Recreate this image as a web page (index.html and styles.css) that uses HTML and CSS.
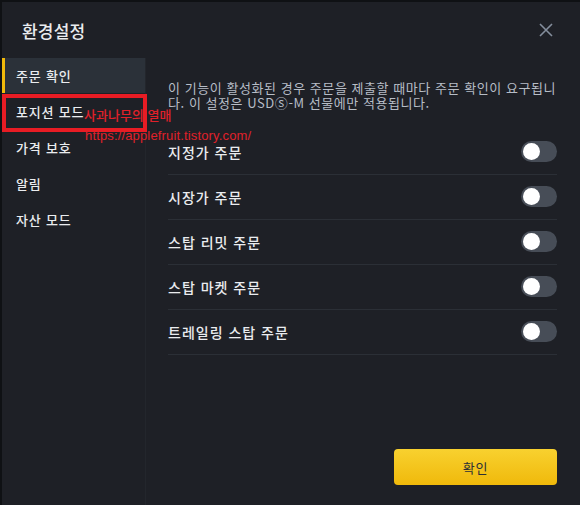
FILE: index.html
```html
<!DOCTYPE html>
<html lang="ko">
<head>
<meta charset="utf-8">
<link rel="stylesheet" href="styles.css">
</head>
<body>
<div class="modal">
  <header class="header">
    <h1 class="title">환경설정</h1>
    <button class="close" aria-label="close">
      <svg width="16" height="16" viewBox="0 0 16 16"><path d="M2 2 L14 14 M14 2 L2 14" stroke="#848e9c" stroke-width="1.6" fill="none"/></svg>
    </button>
  </header>
  <div class="body">
    <nav class="sidebar">
      <div class="item active">주문 확인</div>
      <div class="item">포지션 모드</div>
      <div class="item">가격 보호</div>
      <div class="item">알림</div>
      <div class="item">자산 모드</div>
    </nav>
    <main class="content">
      <p class="desc">이 기능이 활성화된 경우 주문을 제출할 때마다 주문 확인이 요구됩니다. 이 설정은 USDⓈ-M 선물에만 적용됩니다.</p>
      <div class="rows">
        <div class="row"><span class="label">지정가 주문</span><span class="toggle"><span class="knob"></span></span></div>
        <div class="row"><span class="label">시장가 주문</span><span class="toggle"><span class="knob"></span></span></div>
        <div class="row"><span class="label">스탑 리밋 주문</span><span class="toggle"><span class="knob"></span></span></div>
        <div class="row"><span class="label">스탑 마켓 주문</span><span class="toggle"><span class="knob"></span></span></div>
        <div class="row"><span class="label">트레일링 스탑 주문</span><span class="toggle"><span class="knob"></span></span></div>
      </div>
      <div class="footer">
        <button class="confirm">확인</button>
      </div>
    </main>
  </div>
  <div class="mark-box"></div>
  <div class="mark-text">사과나무의 열매</div>
  <div class="mark-url">https://applefruit.tistory.com/</div>
</div>
</body>
</html>
```
FILE: styles.css
```css
* { box-sizing: border-box; }
html, body { margin: 0; padding: 0; }
body {
  background: #0f1114;
  width: 580px;
  height: 505px;
  overflow: hidden;
  font-family: "Noto Sans CJK KR", "Noto Sans", sans-serif;
  padding: 2px 0 0 2px;
}
.modal {
  position: relative;
  width: 578px;
  height: 503px;
  background: #1e2026;
  display: flex;
  flex-direction: column;
  color: #eaecef;
}
.header {
  height: 56px;
  display: flex;
  align-items: center;
  justify-content: space-between;
  padding: 0 22px 0 20px;
  flex: none;
}
.title {
  margin: 0;
  font-size: 17px;
  font-weight: 500;
  color: #eaecef;
  letter-spacing: 0.2px;
}
.close {
  background: none;
  border: 0;
  padding: 0;
  width: 24px;
  height: 24px;
  display: flex;
  align-items: center;
  justify-content: center;
}
.body {
  flex: 1;
  display: flex;
  min-height: 0;
}
.sidebar {
  width: 144px;
  flex: none;
  border-right: 1px solid #23262c;
}
.item {
  height: 36px;
  display: flex;
  align-items: center;
  padding-left: 11px;
  font-size: 13px;
  font-weight: 500;
  color: #eaecef;
  letter-spacing: 0.8px;
  border-left: 3px solid transparent;
}
.item.active {
  background: #2b3139;
  border-left-color: #f0b90b;
  height: 35px;
}
.content {
  flex: 1;
  display: flex;
  flex-direction: column;
  padding: 22px 23px 20px 22px;
}
.desc {
  margin: 0;
  font-size: 13px;
  line-height: 15px;
  color: #b7bdc6;
  letter-spacing: 0.55px;
}
.rows { margin-top: 20px; }
.row {
  height: 45px;
  display: flex;
  align-items: center;
  justify-content: space-between;
  border-bottom: 1px solid #2b2f36;
}
.label {
  font-size: 14px;
  font-weight: 500;
  color: #eaecef;
  letter-spacing: 1px;
}
.toggle {
  width: 36px;
  height: 21px;
  border-radius: 11px;
  background: #474d57;
  display: flex;
  align-items: center;
  padding-left: 2px;
  margin-top: -2px;
}
.knob {
  width: 17px;
  height: 17px;
  border-radius: 50%;
  background: #ffffff;
}
.footer {
  margin-top: auto;
  display: flex;
  justify-content: flex-end;
}
.confirm {
  width: 163px;
  height: 36px;
  border: 0;
  border-radius: 4px;
  background: linear-gradient(180deg, #f8d12f 0%, #f0b90b 100%);
  color: #2b2f36;
  font-family: "Noto Sans CJK KR", sans-serif;
  font-size: 13px;
  letter-spacing: 0.8px;
  padding: 0;
}
.mark-box {
  position: absolute;
  left: 0;
  top: 92px;
  width: 145px;
  height: 38px;
  border: 4px solid #e81c24;
}
.mark-text {
  position: absolute;
  left: 82px;
  top: 105px;
  font-size: 13px;
  line-height: 16px;
  color: #e0202a;
  font-weight: 500;
  letter-spacing: 0px;
}
.mark-url {
  position: absolute;
  left: 83px;
  top: 126px;
  font-family: "Liberation Sans", Arial, sans-serif;
  font-size: 13px;
  line-height: 16px;
  color: #e0202a;
  letter-spacing: 0.15px;
}
```
